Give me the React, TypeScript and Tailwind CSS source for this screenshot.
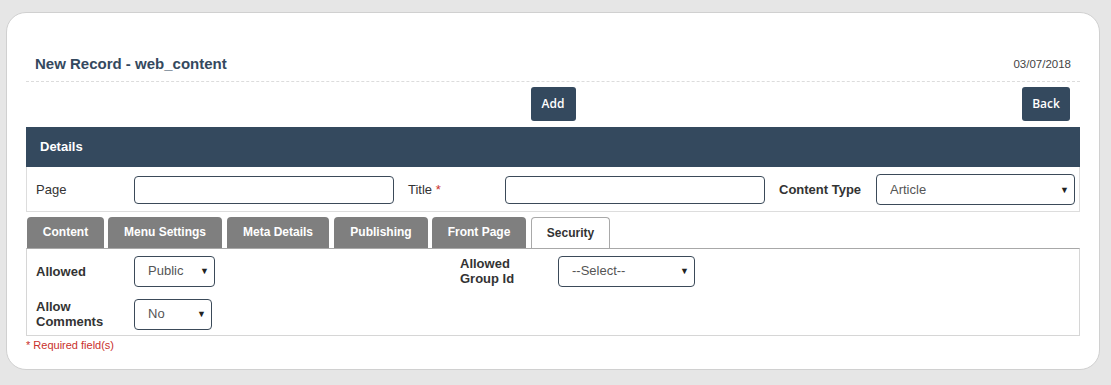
import { ReactNode } from 'react';

const TABS = [
  { label: 'Content', w: 'w-[77px]', ml: 'ml-[1px]' },
  { label: 'Menu Settings', w: 'w-[114px]', ml: 'ml-[4px]' },
  { label: 'Meta Details', w: 'w-[102px]', ml: 'ml-[5px]' },
  { label: 'Publishing', w: 'w-[94px]', ml: 'ml-[5px]' },
  { label: 'Front Page', w: 'w-[94px]', ml: 'ml-[4px]' },
];

function FakeSelect({ value, width, height = 'h-[31px]' }: { value: string; width: string; height?: string }) {
  return (
    <div className={`relative shrink-0 ${width} ${height}`}>
      <select
        defaultValue={value}
        className="h-full w-full appearance-none rounded-[4px] border border-[#3b4a59] bg-white pl-[13px] text-[13px] text-[#555] outline-none"
      >
        <option>{value}</option>
      </select>
      <span className="pointer-events-none absolute right-[6px] top-1/2 -translate-y-1/2 text-[9px] leading-none text-[#222]">
        ▼
      </span>
    </div>
  );
}

function FieldLabel({ children, bold }: { children: ReactNode; bold?: boolean }) {
  return (
    <div className={`w-[98px] shrink-0 text-[13px] leading-[15px] text-[#333] ${bold ? 'font-bold' : ''}`}>
      {children}
    </div>
  );
}

export default function App() {
  return (
    <div className="min-h-[385px] bg-[#e6e6e6] pl-[6px] pr-[11px] pt-[12px] font-['Liberation_Sans',Arial,sans-serif]">
      <div className="h-[358px] rounded-[20px] border border-[#d0d0d0] bg-white px-[19px] pt-[40px]">
        <div className="flex items-center justify-between border-b border-dashed border-[#dcdcdc] pl-[9px] pr-[9px] pb-[5px]">
          <h1 className="text-[15px] font-bold text-[#34495e]">New Record - web_content</h1>
          <span className="text-[11.5px] text-[#444]">03/07/2018</span>
        </div>

        <div className="mt-[5px] grid grid-cols-[1fr_auto_1fr] items-center">
          <div />
          <button
            type="button"
            className="h-[34px] w-[45px] rounded-[3px] bg-[#34495e] font-['Open_Sans',sans-serif] text-[12px] font-semibold text-white"
          >
            Add
          </button>
          <div className="flex justify-end pr-[10px]">
            <button
              type="button"
              className="h-[34px] w-[48px] rounded-[3px] bg-[#34495e] font-['Open_Sans',sans-serif] text-[12px] font-semibold text-white"
            >
              Back
            </button>
          </div>
        </div>

        <div className="mt-[6px] flex h-[40px] items-center bg-[#34495e] pl-[14px] text-[13px] font-bold text-white">
          Details
        </div>
        <div className="flex h-[45px] items-center border border-t-0 border-[#ddd] px-[9px] pt-[2px]">
          <FieldLabel>Page</FieldLabel>
          <input className="h-[28px] w-[260px] shrink-0 rounded-[4px] border border-[#3b4a59] outline-none" />
          <div className="ml-[14px] w-[97px] shrink-0 text-[13px] text-[#333]">
            Title <span className="text-[#c9302c]">*</span>
          </div>
          <input className="h-[28px] w-[260px] shrink-0 rounded-[4px] border border-[#3b4a59] outline-none" />
          <div className="ml-[14px] w-[97px] shrink-0 text-[13px] font-bold text-[#333]">Content Type</div>
          <FakeSelect value="Article" width="w-[199px]" />
        </div>

        <div className="mt-[5px] flex h-[31px] items-end">
          {TABS.map((t) => (
            <div
              key={t.label}
              className={`${t.w} ${t.ml} flex h-[31px] items-center justify-center rounded-t-[4px] bg-[#7f7f7f] text-[12px] font-bold text-white`}
            >
              {t.label}
            </div>
          ))}
          <div className="ml-[5px] flex h-[31px] w-[79px] items-center justify-center rounded-t-[4px] border border-b-0 border-[#a9a9a9] bg-white text-[12px] font-bold text-[#333]">
            Security
          </div>
        </div>
        <div className="flex h-[88px] flex-col gap-[12px] border border-[#d6d6d6] border-t-[#a8a8a8] px-[9px] pt-[7px]">
          <div className="flex items-center">
            <FieldLabel bold>Allowed</FieldLabel>
            <FakeSelect value="Public" width="w-[81px]" />
            <div className="ml-[245px]">
              <FieldLabel bold>
                Allowed
                <br />
                Group Id
              </FieldLabel>
            </div>
            <FakeSelect value="--Select--" width="w-[137px]" />
          </div>
          <div className="flex items-center">
            <FieldLabel bold>
              Allow
              <br />
              Comments
            </FieldLabel>
            <FakeSelect value="No" width="w-[78px]" />
          </div>
        </div>
        <p className="mt-[1px] text-[11px] text-[#c9302c]">* Required field(s)</p>
      </div>
    </div>
  );
}
